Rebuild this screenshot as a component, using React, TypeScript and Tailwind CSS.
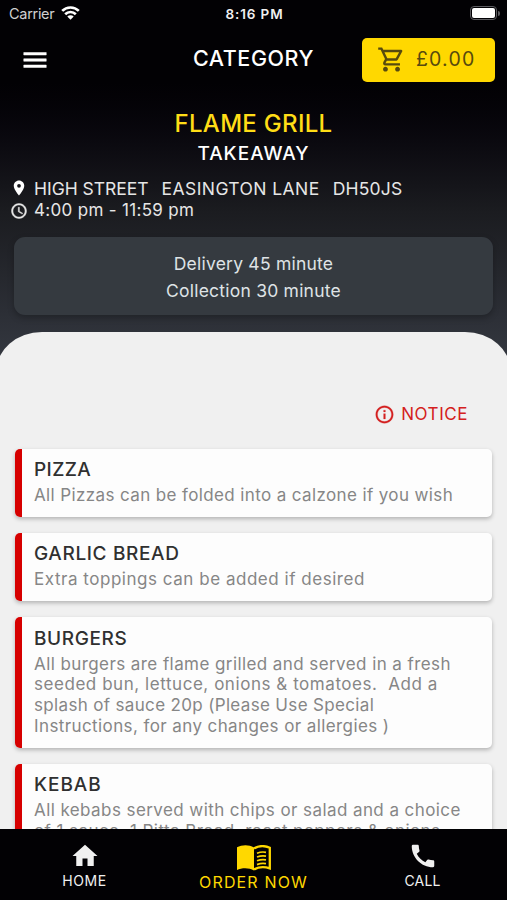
import React from 'react';
import {
  MdAccessTime,
  MdCall,
  MdHome,
  MdInfoOutline,
  MdLocationOn,
  MdMenu,
  MdOutlineShoppingCart,
} from 'react-icons/md';

interface Line {
  text: string;
  tracking: string;
}

interface Category {
  title: string;
  tracking: string;
  lines: Line[];
}

const categories: Category[] = [
  {
    title: 'PIZZA',
    tracking: 'tracking-[0.4px]',
    lines: [{ text: 'All Pizzas can be folded into a calzone if you wish', tracking: 'tracking-[0.38px]' }],
  },
  {
    title: 'GARLIC BREAD',
    tracking: 'tracking-[0.64px]',
    lines: [{ text: 'Extra toppings can be added if desired', tracking: 'tracking-[0.53px]' }],
  },
  {
    title: 'BURGERS',
    tracking: 'tracking-[0.6px]',
    lines: [
      { text: 'All burgers are flame grilled and served in a fresh', tracking: 'tracking-[0.42px]' },
      { text: 'seeded bun, lettuce, onions & tomatoes.  Add a', tracking: 'tracking-[0.55px]' },
      { text: 'splash of sauce 20p (Please Use Special', tracking: 'tracking-[0.34px]' },
      { text: 'Instructions, for any changes or allergies )', tracking: 'tracking-[0.4px]' },
    ],
  },
  {
    title: 'KEBAB',
    tracking: 'tracking-[0.95px]',
    lines: [
      { text: 'All kebabs served with chips or salad and a choice', tracking: 'tracking-[0.42px]' },
      { text: 'of 1 sauce, 1 Pitta Bread, roast peppers & onions', tracking: 'tracking-[0.43px]' },
    ],
  },
];

const StatusBar: React.FC = () => (
  <div className="grid h-7 grid-cols-3 items-center pr-[7px] pl-[9px] text-white">
    <div className="flex items-center gap-[7px]">
      <span className="text-[14.5px] tracking-[-0.3px] text-[#d0d0d0]">Carrier</span>
      <svg className="mb-[2px] h-[14px] w-[19px]" viewBox="0 0 19 14" fill="none" stroke="#fff" strokeWidth="2.7">
        <path d="M1.2 4.9a11.8 11.8 0 0 1 16.6 0" />
        <path d="M4.2 8.2a7.5 7.5 0 0 1 10.6 0" />
        <path d="M9.5 13.8 6.3 10.6a4.5 4.5 0 0 1 6.4 0z" fill="#fff" stroke="none" />
      </svg>
    </div>
    <span className="text-center text-[13.5px] font-semibold tracking-[0.9px] text-[#f0f0f0]">8:16 PM</span>
    <div className="flex items-center justify-end gap-px pb-[2px]">
      <div className="h-[14px] w-[27px] rounded-[4px] border-[1.5px] border-[#5c5c60] p-px">
        <div className="h-full rounded-[2px] bg-white" />
      </div>
      <div className="h-[5px] w-[2px] rounded-r-full bg-[#5c5c60]" />
    </div>
  </div>
);

const Header: React.FC = () => (
  <header className="grid h-[63px] grid-cols-[1fr_auto_1fr] items-center px-3 text-white">
    <button type="button" className="justify-self-start pl-2">
      <MdMenu className="size-[30px] [&_path:not([fill=none])]:stroke-[0.4]" />
    </button>
    <h1 className="pb-[3px] text-[21.5px] leading-6 font-medium tracking-[0.58px]">CATEGORY</h1>
    <button
      type="button"
      className="flex h-[44px] w-[133px] items-center gap-[10px] justify-self-end rounded-[5px] bg-[#ffd800] pl-[15px] text-[#574a0e]"
    >
      <MdOutlineShoppingCart className="size-[29px]" />
      <span className="text-[19.5px] tracking-[1.2px]">£0.00</span>
    </button>
  </header>
);

const ShopInfo: React.FC = () => (
  <section className="text-[#e6e6e6]">
    <h2 className="pt-[17px] text-center text-[24px] leading-8 font-medium tracking-[0.29px] text-[#ffdd16]">
      FLAME GRILL
    </h2>
    <p className="text-center text-[19px] leading-[27px] font-medium tracking-[1px] text-white">TAKEAWAY</p>
    <div className="mt-[12px] flex h-[21px] items-center pl-[10px] text-[17.5px]">
      <MdLocationOn className="mr-[6px] mb-[3px] size-[18px] text-white" />
      <span className="mr-[13px] tracking-[-0.02px]">HIGH STREET</span>
      <span className="mr-[13px] tracking-[0.42px]">EASINGTON LANE</span>
      <span className="tracking-[0.22px]">DH50JS</span>
    </div>
    <div className="flex h-[22px] items-center pl-[10px] text-[17px] tracking-[0.32px]">
      <MdAccessTime className="mr-[6px] mb-px size-[18px] [&_path:not([fill=none])]:stroke-[0.6]" />
      <span>4:00 pm - 11:59 pm</span>
    </div>
    <div className="mx-[14px] mt-[15px] flex h-[78px] flex-col justify-center rounded-[11px] bg-[#353a40] pt-[2px] text-center text-[17.5px] leading-[27px] tracking-[0.22px] text-[#dfe3e6] shadow-[0_3px_6px_rgba(0,0,0,0.25)]">
      <p>Delivery 45 minute</p>
      <p>Collection 30 minute</p>
    </div>
  </section>
);

const CategoryCard: React.FC<{ category: Category }> = ({ category }) => (
  <li className="flex shrink-0 overflow-hidden rounded-[5px] bg-[#fdfdfd] shadow-[0_2px_4px_rgba(0,0,0,0.26)]">
    <div className="w-[6.5px] shrink-0 bg-[#d60000]" />
    <div className="pt-[9.5px] pb-[11px] pl-[12.5px]">
      <h3 className={`text-[19px] leading-[24px] font-medium text-[#303030] ${category.tracking}`}>
        {category.title}
      </h3>
      <div className="pt-[3px]">
        {category.lines.map((line) => (
          <p
            key={line.text}
            className={`text-[17px] leading-[20.8px] whitespace-pre text-[#868686] ${line.tracking}`}
          >
            {line.text}
          </p>
        ))}
      </div>
    </div>
  </li>
);

// open menu: solid left page, ruled right page
const MenuBookIcon: React.FC = () => (
  <svg className="h-[26px] w-[34px]" viewBox="0 0 34 26" fill="none" stroke="currentColor">
    <path d="M0 2.2C5-.5 12-.6 17 2.4v23C12 22.6 5 22.6 0 25z" fill="currentColor" stroke="none" />
    <path d="M17 3.4c4.6-2.6 11-2.8 15.8-.6v20.6c-4.8-1.7-11.2-1.5-15.8 1" strokeWidth="2.3" />
    <path
      d="M20 8.2c3-1.2 6-1.5 9-.9M20 12c3-1.2 6-1.5 9-.9M20 15.8c3-1.2 6-1.5 9-.9M20 19.6c3-1.2 6-1.5 9-.9"
      strokeWidth="1.7"
    />
  </svg>
);

const TabBar: React.FC = () => (
  <nav className="grid h-[71px] shrink-0 grid-cols-3 bg-[#020104] text-[14px] leading-[18px] text-[#f0f0f0]">
    <a className="flex flex-col items-center pt-[12px]">
      <MdHome className="size-[30px]" />
      <span className="pt-px tracking-[0.6px]">HOME</span>
    </a>
    <a className="flex flex-col items-center pt-[16px] text-[#ffd800]">
      <MenuBookIcon />
      <span className="pt-px text-[16px] leading-[20px] tracking-[1.15px]">ORDER NOW</span>
    </a>
    <a className="flex flex-col items-center pt-[12px]">
      <MdCall className="size-[30px]" />
      <span className="pt-px tracking-[0.2px]">CALL</span>
    </a>
  </nav>
);

export default function App() {
  return (
    <div className="flex h-[900px] w-[507px] flex-col overflow-hidden bg-[#f0f0f0] font-['Inter',sans-serif]">
      <div className="h-[372px] shrink-0 bg-linear-to-b from-[#020104] from-22% via-[#1b1c20] via-57% to-[#363a43]">
        <StatusBar />
        <Header />
        <ShopInfo />
      </div>
      <main className="-mx-1 -mt-[40px] flex min-h-0 flex-1 flex-col overflow-hidden rounded-t-[46px_40px] bg-[#f0f0f0] px-1">
        <button
          type="button"
          className="mt-[71px] mr-[39px] flex items-center gap-[6px] self-end text-[17px] leading-[22px] tracking-[0.55px] text-[#d42020]"
        >
          <MdInfoOutline className="size-[21px] [&_path:not([fill=none])]:stroke-[0.3]" />
          NOTICE
        </button>
        <ul className="mt-[23.5px] flex flex-col gap-[16px] px-[15px]">
          {categories.map((category) => (
            <CategoryCard key={category.title} category={category} />
          ))}
        </ul>
      </main>
      <TabBar />
    </div>
  );
}
